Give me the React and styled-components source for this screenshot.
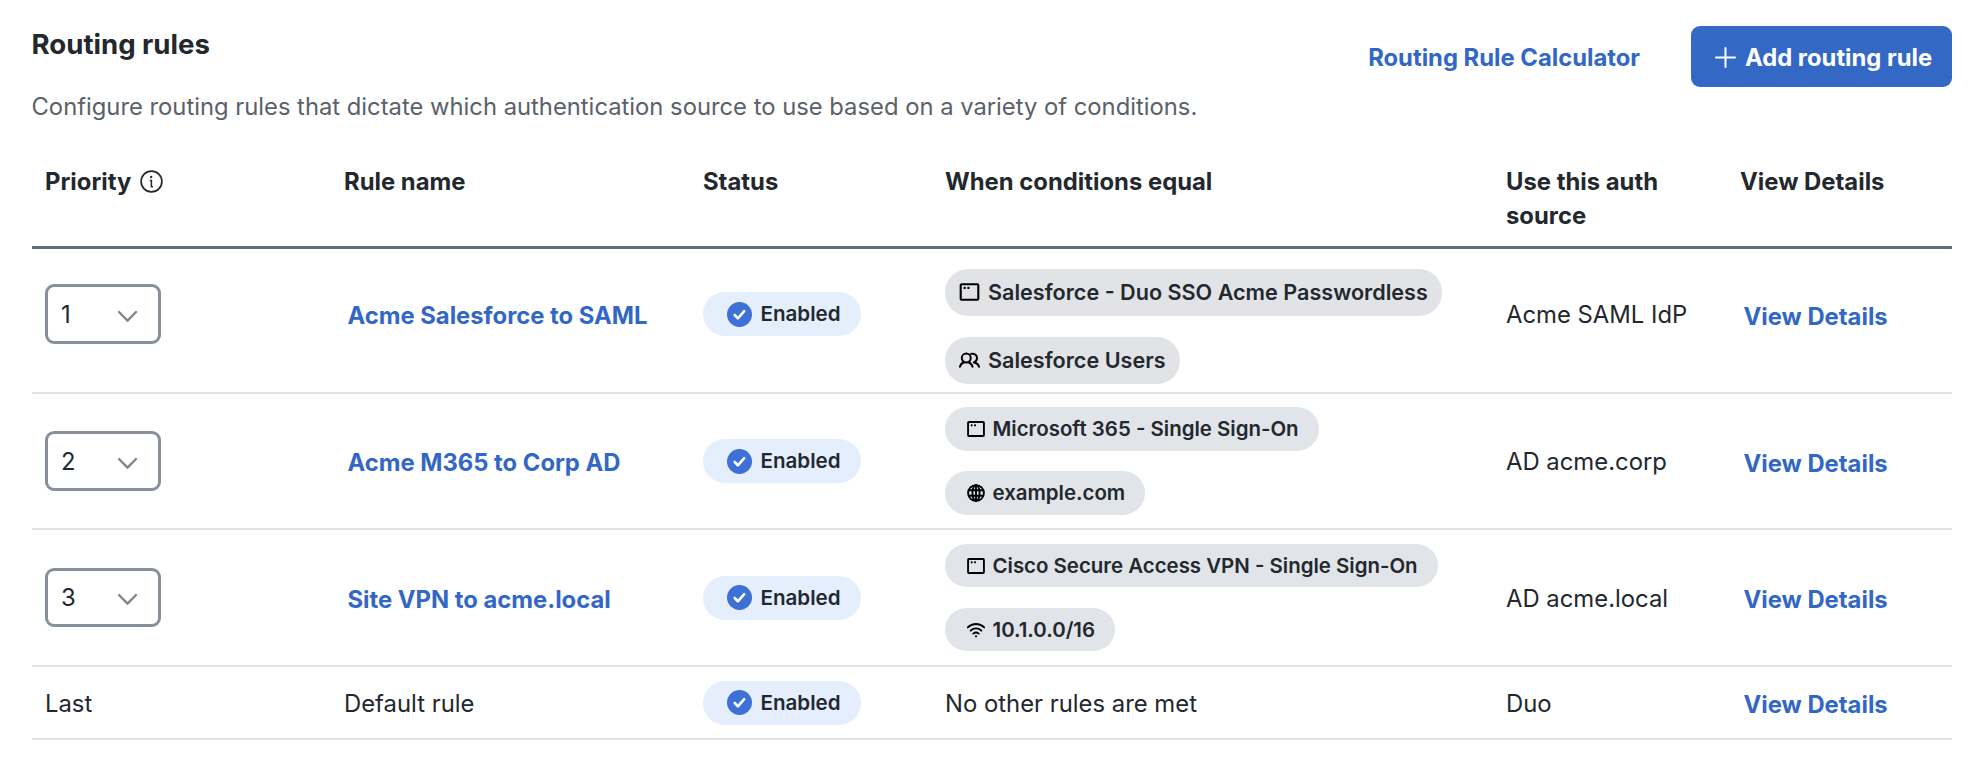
import { useState } from "react";
import styled, { createGlobalStyle } from "styled-components";

const rules = [
  {
    priority: "1",
    name: "Acme Salesforce to SAML",
    conditions: [
      { icon: "app", label: "Salesforce - Duo SSO Acme Passwordless" },
      { icon: "users", label: "Salesforce Users" },
    ],
    source: "Acme SAML IdP",
    height: 145,
    large: true,
  },
  {
    priority: "2",
    name: "Acme M365 to Corp AD",
    conditions: [
      { icon: "app", label: "Microsoft 365 - Single Sign-On" },
      { icon: "globe", label: "example.com" },
    ],
    source: "AD acme.corp",
    height: 136,
  },
  {
    priority: "3",
    name: "Site VPN to acme.local",
    conditions: [
      { icon: "app", label: "Cisco Secure Access VPN - Single Sign-On" },
      { icon: "network", label: "10.1.0.0/16" },
    ],
    source: "AD acme.local",
    height: 137,
    compact: true,
  },
];

const AppIcon = () => (
  <Icon viewBox="0 0 20 20">
    <rect x="1.2" y="2.2" width="17.6" height="15.6" rx="1" />
    <circle cx="5.2" cy="5.9" r="1.2" fill="currentColor" stroke="none" />
    <circle cx="8.9" cy="5.9" r="1.2" fill="currentColor" stroke="none" />
  </Icon>
);

const UsersIcon = () => (
  <Icon viewBox="0 0 22 20">
    <circle cx="7.6" cy="8" r="4.7" />
    <path d="M1 17c.7-2.4 2.2-3.9 4.2-4.6M14.2 17c-.7-2.4-2.2-3.9-4.2-4.6" />
    <path d="M12.6 3.6c3.4-1 6.3 1.2 6.3 4.3 0 2.2-1.3 3.9-3.3 4.6 2.6.4 4.7 2.2 5.4 4.5" />
  </Icon>
);

const GlobeIcon = () => (
  <Icon viewBox="0 0 20 20">
    <circle cx="10" cy="10" r="8.8" />
    <ellipse cx="10" cy="10" rx="4" ry="8.8" />
    <path d="M10 1.2v17.6M2 7h16M2 13h16" />
  </Icon>
);

const NetworkIcon = () => (
  <Icon viewBox="0 0 20 20">
    <path d="M.9 7.1c5.2-5 13-5 18.2 0M4 10.7c3.5-3.3 8.5-3.3 12 0M7 14c1.8-1.6 4.2-1.6 6 0" />
    <circle cx="10" cy="17" r="1.2" fill="currentColor" stroke="none" />
  </Icon>
);

const icons = {
  app: AppIcon,
  users: UsersIcon,
  globe: GlobeIcon,
  network: NetworkIcon,
};

const Status = () => (
  <Badge>
    <svg width="25" height="25" viewBox="0 0 25 25" fill="none">
      <circle cx="12.5" cy="12.5" r="12.5" fill="#3d71d5" />
      <path
        d="M7.7 13l3.2 3.3 6.3-7.1"
        stroke="#fff"
        strokeWidth="2.6"
        strokeLinecap="round"
        strokeLinejoin="round"
      />
    </svg>
    Enabled
  </Badge>
);

const PrioritySelect = ({ value, compact }) => {
  const [priority] = useState(value);

  return (
    <Select type="button" $compact={compact}>
      {priority}
      <svg width="21" height="13" viewBox="0 0 21 13" fill="none">
        <path
          d="M2 2l8.5 8.7L19 2"
          stroke="#7f8791"
          strokeWidth="2.4"
          strokeLinecap="round"
          strokeLinejoin="round"
        />
      </svg>
    </Select>
  );
};

const RuleRow = ({ rule }) => (
  <Row $height={rule.height}>
    <Cell $large={rule.large}>
      <PrioritySelect value={rule.priority} compact={rule.compact} />
    </Cell>
    <Cell $large={rule.large}>
      <RuleLink href="#">{rule.name}</RuleLink>
    </Cell>
    <Cell $large={rule.large}>
      <Status />
    </Cell>
    <Conditions $large={rule.large} $compact={rule.compact}>
      {rule.conditions.map(({ icon, label }) => {
        const ConditionIcon = icons[icon];
        return (
          <Chip key={label} $large={rule.large} $compact={rule.compact}>
            <ConditionIcon />
            {label}
          </Chip>
        );
      })}
    </Conditions>
    <Cell $large={rule.large}>
      <Text>{rule.source}</Text>
    </Cell>
    <Cell $large={rule.large}>
      <DetailsLink href="#">View Details</DetailsLink>
    </Cell>
  </Row>
);

const App = () => {
  return (
    <>
      <GlobalStyle />
      <Page>
        <Header>
          <Intro>
            <Title>Routing rules</Title>
            <Description>
              Configure routing rules that dictate which authentication source
              to use based on a variety of conditions.
            </Description>
          </Intro>
          <Actions>
            <CalculatorLink href="#">Routing Rule Calculator</CalculatorLink>
            <AddButton type="button">
              <svg width="21" height="21" viewBox="0 0 21 21" fill="none">
                <path
                  d="M10.5 1v19M1 10.5h19"
                  stroke="#fff"
                  strokeWidth="2"
                  strokeLinecap="round"
                />
              </svg>
              Add routing rule
            </AddButton>
          </Actions>
        </Header>
        <Table>
          <HeadRow>
            <HeadCell>
              Priority
              <svg width="23" height="23" viewBox="0 0 23 23" fill="none">
                <circle
                  cx="11.5"
                  cy="11.5"
                  r="10.4"
                  stroke="#23282e"
                  strokeWidth="1.7"
                />
                <circle cx="11.2" cy="7" r="1.2" fill="#23282e" />
                <path
                  d="M9.8 10.5h1.6v6.2h1.5"
                  stroke="#23282e"
                  strokeWidth="1.5"
                />
              </svg>
            </HeadCell>
            <HeadCell>Rule name</HeadCell>
            <HeadCell>Status</HeadCell>
            <HeadCell>When conditions equal</HeadCell>
            <HeadCell>Use this auth source</HeadCell>
            <HeadCell>View Details</HeadCell>
          </HeadRow>
          {rules.map((rule) => (
            <RuleRow key={rule.priority} rule={rule} />
          ))}
          <Row $height={73}>
            <Cell>
              <Text>Last</Text>
            </Cell>
            <Cell>
              <Text>Default rule</Text>
            </Cell>
            <Cell>
              <Status />
            </Cell>
            <Cell>
              <Text>No other rules are met</Text>
            </Cell>
            <Cell>
              <Text>Duo</Text>
            </Cell>
            <Cell>
              <DetailsLink href="#">View Details</DetailsLink>
            </Cell>
          </Row>
        </Table>
      </Page>
    </>
  );
};

const GlobalStyle = createGlobalStyle`
  * {
    box-sizing: border-box;
  }

  body {
    margin: 0;
    background: #fff;
    color: #23282e;
    font-family: Inter, "Liberation Sans", sans-serif;
    font-size: 23.85px;
    line-height: 34px;
  }
`;

const Page = styled.main`
  width: 1973px;
  min-height: 779px;
  padding: 26px 21px 0 32px;
`;

const Header = styled.header`
  display: flex;
  justify-content: space-between;
  align-items: flex-start;
`;

const Intro = styled.div`
  margin-left: -0.5px;
`;

const Title = styled.h1`
  margin: 0;
  font-size: 27.6px;
  font-weight: 700;
  line-height: 36px;
`;

const Description = styled.p`
  margin: 28px 0 0;
  color: #5a616b;
  font-size: 23.79px;
`;

const Actions = styled.div`
  display: flex;
  align-items: center;
  gap: 51px;
`;

const Link = styled.a`
  color: #3367c6;
  font-size: 23.8px;
  font-weight: 700;
  text-decoration: none;
`;

const CalculatorLink = styled(Link)`
  padding-top: 2px;
`;

const AddButton = styled.button`
  display: flex;
  align-items: center;
  gap: 9px;
  width: 261px;
  height: 61px;
  padding: 2px 0 0 24px;
  border: 0;
  border-radius: 9px;
  background: #3468c5;
  color: #fff;
  font-family: inherit;
  font-size: 23.8px;
  font-weight: 700;
  white-space: nowrap;
`;

const Table = styled.section`
  margin-top: 27px;
`;

const Row = styled.div`
  display: grid;
  grid-template-columns: 312px 359px 242px 561px 234px 1fr;
  height: ${({ $height }) => $height}px;
  border-bottom: 2px solid #dfe3e7;
`;

const HeadRow = styled(Row)`
  height: 98px;
  padding-top: 14px;
  border-bottom: 3px solid #656e78;
`;

const HeadCell = styled.div`
  display: flex;
  align-items: flex-start;
  gap: 9px;
  padding-right: 60px;
  font-weight: 700;

  &:first-child {
    padding-left: 13px;
  }

  &:last-child {
    padding-right: 0;
  }

  svg {
    margin-top: 5px;
  }
`;

const Cell = styled.div`
  display: flex;
  align-items: center;
  padding-bottom: ${({ $large }) => ($large ? 13 : 0)}px;

  &:first-child {
    padding-left: 13px;
  }
`;

const Text = styled.span`
  padding-top: 2px;
`;

const RuleLink = styled(Link)`
  padding: 4px 0 0 3.5px;
`;

const DetailsLink = styled(Link)`
  padding: 5px 0 0 3.5px;
`;

const Select = styled.button`
  display: flex;
  align-items: center;
  justify-content: space-between;
  width: 116px;
  height: ${({ $compact }) => ($compact ? 59 : 60)}px;
  padding: 1px 20px 0 13px;
  border: 3px solid #878f99;
  border-radius: 9px;
  background: #fff;
  color: inherit;
  font: inherit;

  svg {
    margin-top: 3px;
  }
`;

const Badge = styled.span`
  display: flex;
  align-items: center;
  gap: 8.5px;
  width: 158px;
  height: 44px;
  padding-left: 24px;
  border-radius: 22px;
  background: #e4eefd;
  font-size: 20.55px;
  font-weight: 600;
`;

const Conditions = styled.div`
  display: flex;
  flex-direction: column;
  align-items: flex-start;
  justify-content: center;
  gap: ${({ $large, $compact }) => ($large || $compact ? 21 : 20)}px;
  padding-top: ${({ $large }) => ($large ? 12 : 0)}px;
`;

const Chip = styled.span`
  display: flex;
  align-items: center;
  gap: ${({ $large }) => ($large ? 8 : 7.5)}px;
  height: ${({ $large, $compact }) => ($large ? 47 : $compact ? 43 : 44)}px;
  padding: ${({ $large }) => ($large ? "0 14px 1px" : "0 20px 0 22px")};
  border-radius: 23px;
  background: ${({ $large }) => ($large ? "#e2e3e7" : "#e1e4e8")};
  font-size: ${({ $large }) => ($large ? 21.6 : 20.43)}px;
  font-weight: 600;
  white-space: nowrap;

  svg {
    width: ${({ $large }) => ($large ? 21 : 18)}px;
  }
`;

const Icon = styled.svg`
  height: 20px;
  color: #000;
  fill: none;
  stroke: currentColor;
  stroke-width: 2.1;
  stroke-linecap: round;
  stroke-linejoin: round;
`;

export default App;
